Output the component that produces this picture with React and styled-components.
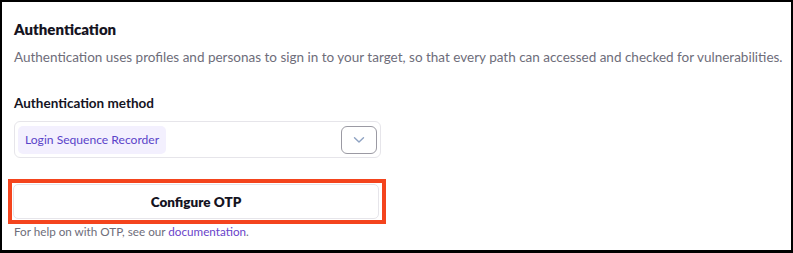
import React from "react";
import styled, { createGlobalStyle } from "styled-components";

const GlobalStyle = createGlobalStyle`
  html, body {
    margin: 0;
    padding: 0;
    background: #ffffff;
  }
  body {
    font-family: "Lato", "Noto Sans", sans-serif;
  }
  * {
    box-sizing: border-box;
  }
`;

const Frame = styled.div`
  width: 793px;
  height: 253px;
  border-style: solid;
  border-color: #000000;
  border-width: 2px 2px 3px 2px;
  background: #ffffff;
  padding: 17px 12px 0 12px;
  display: flex;
  flex-direction: column;
`;

const Title = styled.h2`
  margin: 0;
  font-size: 15px;
  line-height: 20px;
  font-weight: 800;
  color: #15141f;
`;

const Description = styled.p`
  margin: 9px 0 0 0;
  font-size: 13.5px;
  line-height: 18px;
  color: #6e6d7a;
  white-space: nowrap;
`;

const Label = styled.label`
  margin-top: 28px;
  font-size: 13.5px;
  line-height: 18px;
  font-weight: 700;
  color: #15141f;
`;

const Select = styled.div`
  margin-top: 9px;
  width: 367px;
  height: 37px;
  border: 1px solid #e6e5ea;
  border-radius: 6px;
  padding: 3px 3px 3px 3px;
  display: flex;
  align-items: center;
  justify-content: space-between;
`;

const Chip = styled.span`
  height: 28px;
  padding: 0 7px;
  display: flex;
  align-items: center;
  border-radius: 5px;
  background: #f3f0fe;
  color: #5a43c9;
  font-size: 12.1px;
`;

const ChevronButton = styled.button`
  width: 36px;
  height: 28px;
  border: 1px solid #9b9aa3;
  border-radius: 6px;
  background: #ffffff;
  display: flex;
  align-items: center;
  justify-content: center;
  padding: 0;
  color: #8ea2c2;
`;

const Highlight = styled.div`
  margin: 21px 0 0 -6px;
  width: 378px;
  border: 4px solid #f4441d;
  padding: 1px 2px 1px 1px;
`;

const ActionButton = styled.button`
  width: 366px;
  height: 35px;
  border: 1px solid #e6e5ea;
  border-radius: 5px;
  background: #ffffff;
  font-family: "Lato", "Noto Sans", sans-serif;
  font-size: 13.5px;
  font-weight: 800;
  color: #15141f;
  display: block;
`;

const Help = styled.p`
  margin: 0;
  font-size: 11.7px;
  line-height: 15px;
  color: #6e6d7a;

  a {
    color: #6a43c9;
    text-decoration: none;
  }
`;

export default function App() {
  return (
    <>
      <GlobalStyle />
      <Frame>
        <Title>Authentication</Title>
        <Description>
          Authentication uses profiles and personas to sign in to your target, so
          that every path can accessed and checked for vulnerabilities.
        </Description>
        <Label>Authentication method</Label>
        <Select>
          <Chip>Login Sequence Recorder</Chip>
          <ChevronButton aria-label="Open">
            <svg width="12" height="8" viewBox="0 0 12 8" fill="none">
              <path
                d="M1.5 1.8 L6 6 L10.5 1.8"
                stroke="currentColor"
                strokeWidth="1.4"
                strokeLinecap="round"
                strokeLinejoin="round"
              />
            </svg>
          </ChevronButton>
        </Select>
        <Highlight>
          <ActionButton>Configure OTP</ActionButton>
        </Highlight>
        <Help>
          For help on with OTP, see our <a href="#docs">documentation</a>.
        </Help>
      </Frame>
    </>
  );
}
